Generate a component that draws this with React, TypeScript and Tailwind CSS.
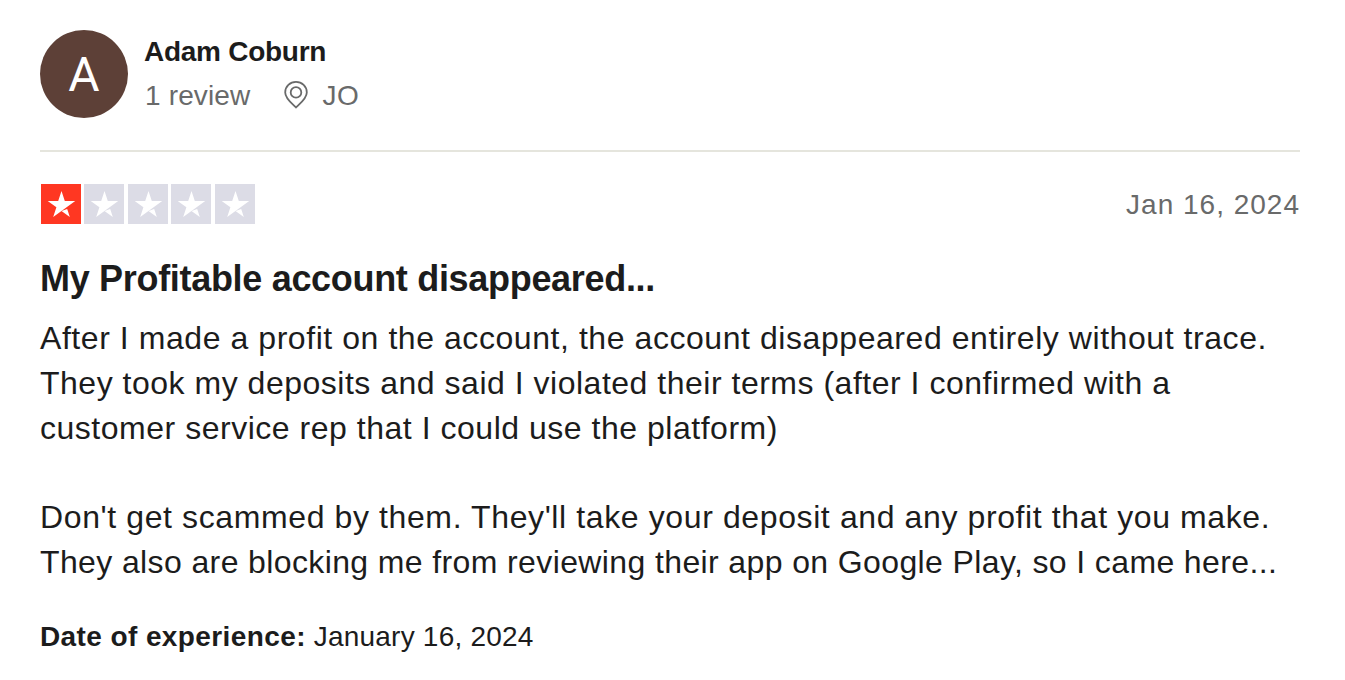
import React from "react";

interface StarProps {
    filled: boolean;
}

const Star: React.FC<StarProps> = ({ filled }) => (
    <svg viewBox="0 0 40 40" className={filled ? "w-10 h-10 bg-[#ff3722]" : "w-10 h-10 bg-[#dcdce6]"}>
        <path d="M20.5 7l3.3 10h10.4L12.2 33l3.2-9.8L6.7 17h10.5z" fill="#fff" />
        <path d="M20.5 27l5.7-2.1 2.6 8.1z" fill="#fff" />
    </svg>
);

const PinIcon: React.FC = () => (
    <svg viewBox="0 0 24 28" className="w-6 h-7" fill="none" stroke="#696a6a" strokeWidth="1.8">
        <path d="M12 26.4C8.5 22.9 1.2 17.6 1.2 11.4a10.8 10.5 0 0 1 21.6 0c0 6.2-7.3 11.5-10.8 15z" />
        <circle cx="12" cy="11.4" r="5.3" />
    </svg>
);

export default function App() {
    return (
        <div className="bg-white w-[1345px] h-[680px] overflow-hidden pl-10 pr-[45px] pt-[30px] font-['Liberation_Sans',sans-serif] text-[#1c1c1c] whitespace-nowrap">
            <header className="flex h-[122px] border-b-2 border-[#e5e5dd]">
                <div className="w-[88px] h-[88px] rounded-full bg-[#5d4037] text-white flex items-center justify-center pt-px font-['Roboto',sans-serif] text-[48px] leading-none">
                    A
                </div>
                <div className="ml-4">
                    <div className="text-[28px] leading-[44px] font-bold tracking-[-0.27px]">Adam Coburn</div>
                    <div className="flex items-center h-11 pl-px text-[28px] text-[#696a6a]">
                        <span className="tracking-[0.15px]">1 review</span>
                        <span className="ml-[34px] mr-[14px] pb-0.5"><PinIcon /></span>
                        <span className="tracking-[0.5px]">JO</span>
                    </div>
                </div>
            </header>

            <div className="flex items-center justify-between mt-8 h-10">
                <div className="flex gap-[3.4px] pl-px">
                    {[1, 2, 3, 4, 5].map((n) => (
                        <Star key={n} filled={n === 1} />
                    ))}
                </div>
                <time className="pt-px text-[28px] text-[#696a6a] tracking-[1px]">Jan 16, 2024</time>
            </div>

            <h2 className="mt-8 text-[36px] leading-[46px] font-bold tracking-[-0.31px]">My Profitable account disappeared...</h2>

            <div className="mt-[14px] text-[32px] leading-[45px]">
                <p className="tracking-[0.56px]">After I made a profit on the account, the account disappeared entirely without trace.</p>
                <p className="tracking-[0.51px]">They took my deposits and said I violated their terms (after I confirmed with a</p>
                <p className="tracking-[0.52px]">customer service rep that I could use the platform)</p>
                <p className="mt-11 tracking-[0.61px]">Don't get scammed by them. They'll take your deposit and any profit that you make.</p>
                <p className="tracking-[0.38px]">They also are blocking me from reviewing their app on Google Play, so I came here...</p>
            </div>

            <p className="mt-8 text-[28px] leading-[40px]">
                <b className="tracking-[0.4px]">Date of experience:</b> <span className="tracking-[0.22px]">January 16, 2024</span>
            </p>
        </div>
    );
}
